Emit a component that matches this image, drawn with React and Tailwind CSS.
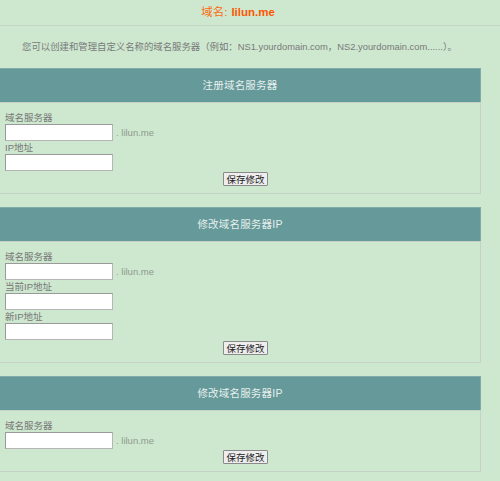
import React from 'react';

const cjk = "font-['Liberation_Sans','Noto_Sans_CJK_SC',sans-serif]";

function Field({ label, suffix }) {
  return (
    <div className="flex flex-col">
      <label className="text-[9.5px] leading-[12px] text-[#777]">{label}</label>
      <div className="flex items-center">
        <input
          type="text"
          className="w-[108px] h-[17px] bg-white border border-[#b5b5b5] border-t-[#9a9a9a] border-l-[#9a9a9a] outline-none"
        />
        {suffix && (
          <span className="ml-[3px] text-[9.5px] leading-[12px] text-[#8d9a8d] mt-[1px]">. lilun.me</span>
        )}
      </div>
    </div>
  );
}

function Panel({ title, fields, className = '' }) {
  return (
    <div className={`w-[481px] ${className}`}>
      <div className="h-[34px] bg-[#669999] border-t border-r border-[#80ada9] flex items-center justify-center">
        <span className="text-[10.5px] text-[#e6f0ee] tracking-[0.2px]">{title}</span>
      </div>
      <div className="border-r border-b border-t border-[#c6d2c6] pt-[9px] pl-[5px] pb-[7px]">
        <div className="flex flex-col gap-[1px]">
          {fields.map((f, i) => (
            <Field key={i} label={f.label} suffix={f.suffix} />
          ))}
        </div>
        <div className="flex justify-center pl-[6px] mt-[1px]">
          <button className="h-[14px] px-[2px] text-[9.5px] leading-[11px] text-[#222] bg-[#eeeeee] border border-[#8a8a8a] rounded-[1px]">
            保存修改
          </button>
        </div>
      </div>
    </div>
  );
}

export default function App() {
  return (
    <div className={`w-[500px] min-h-[481px] bg-[#cde8cf] ${cjk}`}>
      <div className="h-[26px] border-b border-[#c2d6c3]">
        <div className="w-[476px] h-full flex items-center justify-center text-[11.5px] text-[#ff6a10]">
          <span>域名:</span>
          <span className="ml-[4px] font-bold text-[#ff5500]">lilun.me</span>
        </div>
      </div>

      <p className="mt-[15px] pl-[22px] text-[9.4px] leading-[12px] text-[#7a7a7a]">
        您可以创建和管理自定义名称的域名服务器（例如：NS1.yourdomain.com，NS2.yourdomain.com......）。
      </p>

      <Panel
        className="mt-[15px]"
        title="注册域名服务器"
        fields={[
          { label: '域名服务器', suffix: true },
          { label: 'IP地址' },
        ]}
      />

      <Panel
        className="mt-[13px]"
        title="修改域名服务器IP"
        fields={[
          { label: '域名服务器', suffix: true },
          { label: '当前IP地址' },
          { label: '新IP地址' },
        ]}
      />

      <Panel
        className="mt-[13px]"
        title="修改域名服务器IP"
        fields={[{ label: '域名服务器', suffix: true }]}
      />
    </div>
  );
}
